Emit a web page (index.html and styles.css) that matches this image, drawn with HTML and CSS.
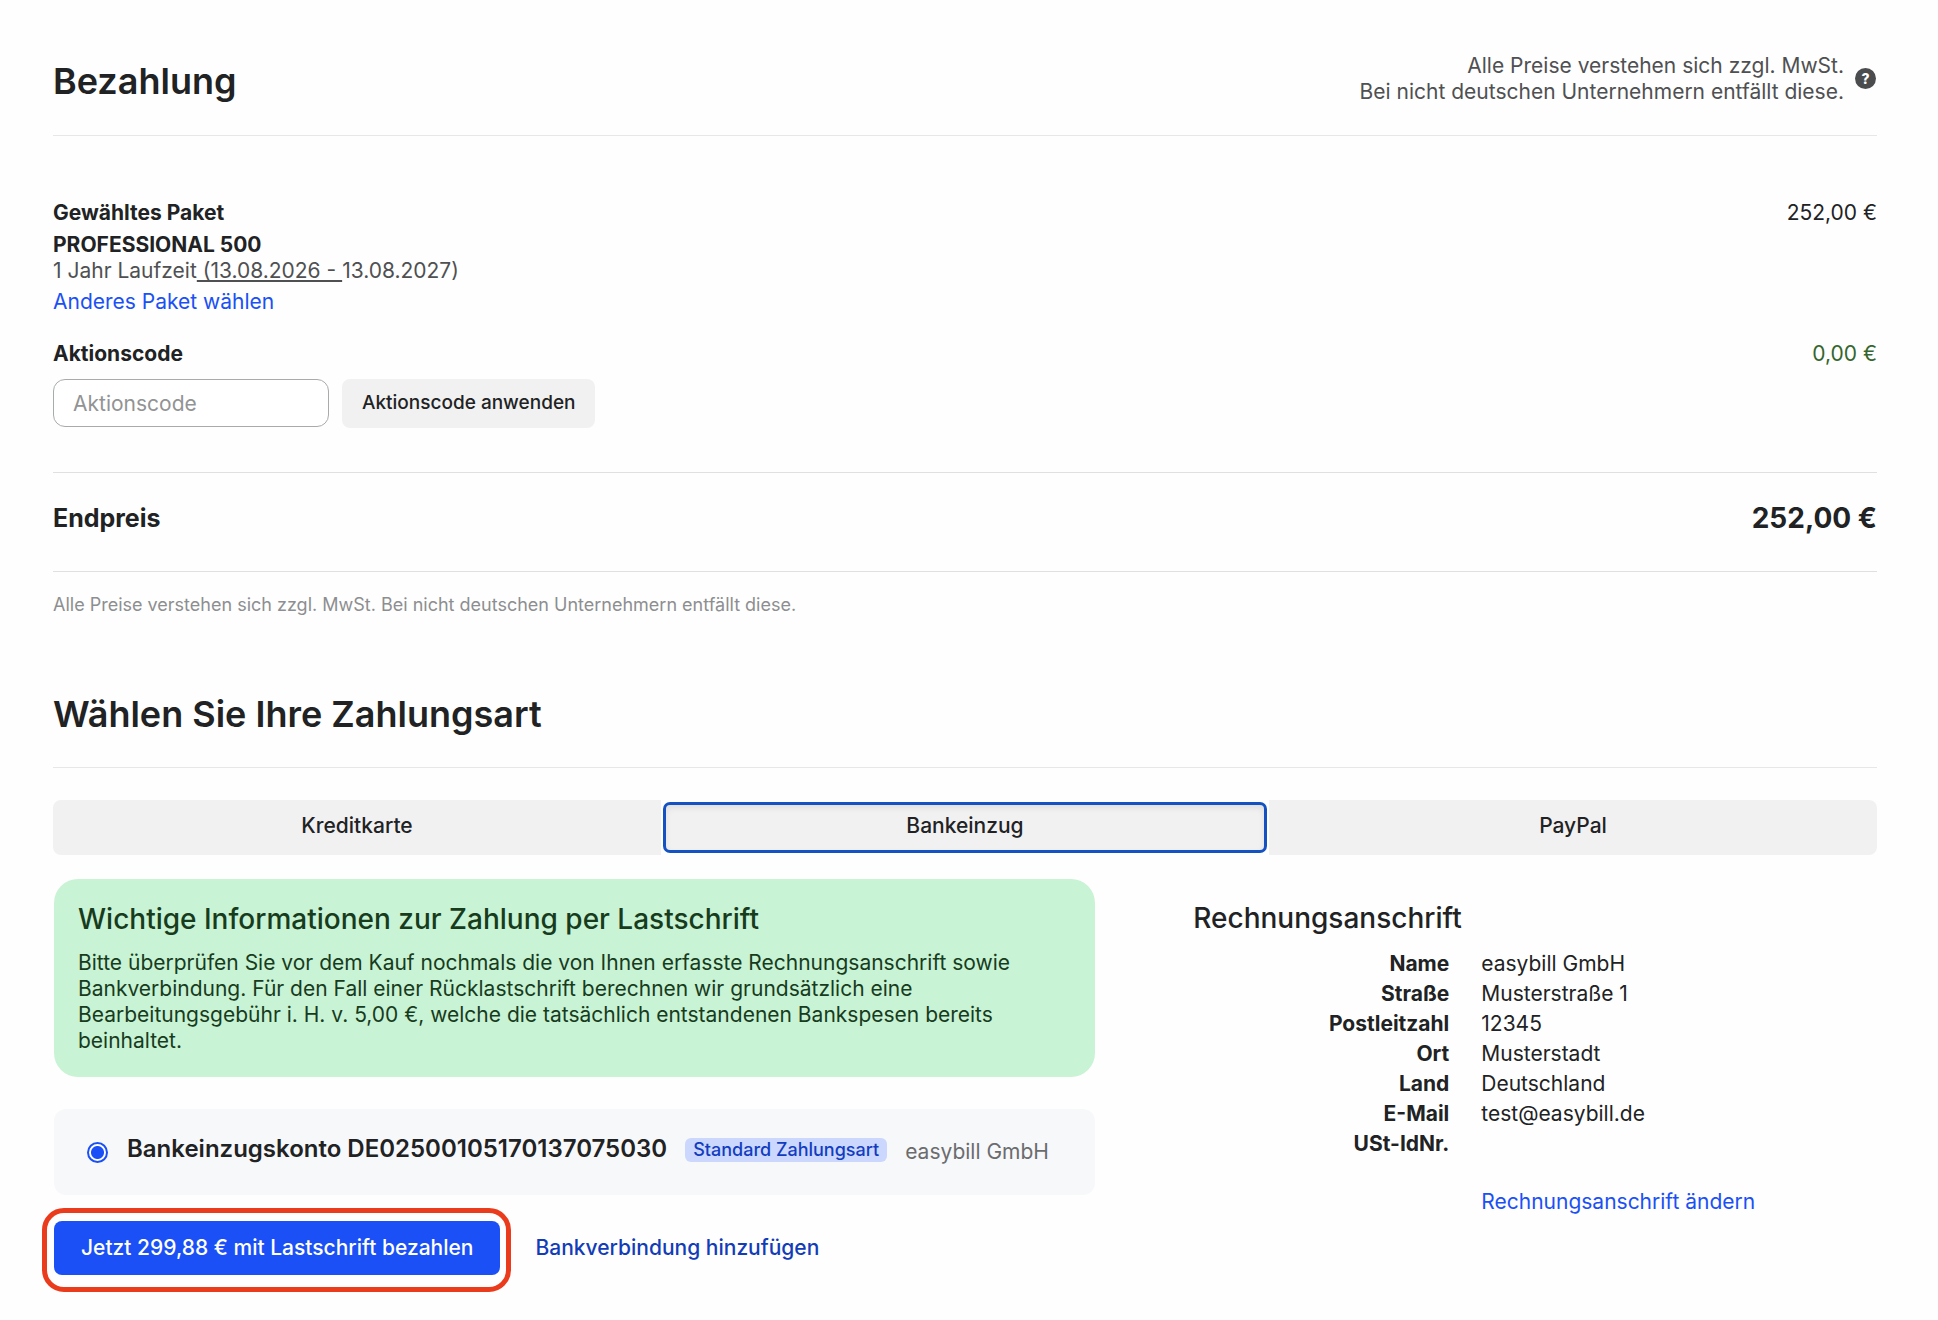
FILE: index.html
```html
<!DOCTYPE html>
<html lang="de">

<head>
    <meta charset="UTF-8">
    <meta name="viewport" content="width=device-width, initial-scale=1.0">
    <title>Bezahlung</title>
    <link rel="stylesheet" href="styles.css">
</head>

<body>
    <main class="container">
        <header class="page-header">
            <h1 class="title">Bezahlung</h1>
            <div class="vat">
                <p>Alle Preise verstehen sich zzgl. MwSt.<br>Bei nicht deutschen Unternehmern entfällt diese.</p>
                <button type="button" class="help" aria-label="Hilfe">?</button>
            </div>
        </header>

        <section class="order">
            <div class="row">
                <h2 class="label">Gewähltes Paket</h2>
                <span>252,00 €</span>
            </div>
            <div class="package">
                <strong>PROFESSIONAL 500</strong>
                <p class="runtime">1 Jahr Laufzeit<u> (13.08.2026 - </u>13.08.2027)</p>
            </div>
            <a href="#" class="link">Anderes Paket wählen</a>
            <div class="row code-row">
                <label class="label" for="code">Aktionscode</label>
                <span class="discount">0,00 €</span>
            </div>
            <form class="code-form">
                <input type="text" id="code" class="code-input" placeholder="Aktionscode">
                <button type="button" class="btn code-btn">Aktionscode anwenden</button>
            </form>
        </section>

        <section class="total">
            <h2 class="total-label">Endpreis</h2>
            <span class="total-price">252,00 €</span>
        </section>
        <p class="note">Alle Preise verstehen sich zzgl. MwSt. Bei nicht deutschen Unternehmern entfällt diese.</p>

        <h2 class="title payment-title">Wählen Sie Ihre Zahlungsart</h2>

        <div class="tabs">
            <button type="button" class="btn tab">Kreditkarte</button>
            <button type="button" class="btn tab active">Bankeinzug</button>
            <button type="button" class="btn tab">PayPal</button>
        </div>

        <div class="columns">
            <section class="payment">
                <div class="info">
                    <h3 class="subtitle">Wichtige Informationen zur Zahlung per Lastschrift</h3>
                    <p>Bitte überprüfen Sie vor dem Kauf nochmals die von Ihnen erfasste Rechnungsanschrift sowie Bankverbindung. Für den Fall einer Rücklastschrift berechnen wir grundsätzlich eine Bearbeitungsgebühr i. H. v. 5,00 €, welche die tatsächlich entstandenen Bankspesen bereits beinhaltet.</p>
                </div>
                <div class="account">
                    <input type="radio" id="account" name="account" class="radio" checked>
                    <label for="account" class="account-label">
                        <span class="iban">Bankeinzugskonto DE02500105170137075030</span>
                        <span class="badge">Standard Zahlungsart</span>
                        <span class="owner">easybill GmbH</span>
                    </label>
                </div>
                <div class="actions">
                    <div class="highlight">
                        <button type="button" class="btn pay-btn">Jetzt 299,88 € mit Lastschrift bezahlen</button>
                    </div>
                    <a href="#" class="add-link">Bankverbindung hinzufügen</a>
                </div>
            </section>

            <section class="billing">
                <h3 class="subtitle">Rechnungsanschrift</h3>
                <table class="address">
                    <tr><th scope="row">Name</th><td>easybill GmbH</td></tr>
                    <tr><th scope="row">Straße</th><td>Musterstraße 1</td></tr>
                    <tr><th scope="row">Postleitzahl</th><td>12345</td></tr>
                    <tr><th scope="row">Ort</th><td>Musterstadt</td></tr>
                    <tr><th scope="row">Land</th><td>Deutschland</td></tr>
                    <tr><th scope="row">E-Mail</th><td>test@easybill.de</td></tr>
                    <tr><th scope="row">USt-IdNr.</th><td></td></tr>
                </table>
                <a href="#" class="link address-link">Rechnungsanschrift ändern</a>
            </section>
        </div>
    </main>
</body>

</html>
```

FILE: styles.css
```css
* {
    margin: 0;
    padding: 0;
    box-sizing: border-box;
}

body {
    background-color: #fefefe;
    color: #212224;
    font-family: Inter, "Liberation Sans", sans-serif;
    font-size: 21px;
    line-height: 26px;
}

.container {
    padding: 52px 61px 28px 53px;
}

.page-header {
    display: flex;
    justify-content: space-between;
    border-bottom: 1px solid #e6e7e8;
    padding-bottom: 30px;
}

.title {
    font-size: 36px;
    font-weight: 600;
    line-height: 52px;
    padding-top: 3px;
}

.page-header .title {
    height: 52px;
}

.vat {
    display: flex;
    align-items: center;
    gap: 11px;
    padding-top: 1px;
    color: #4f5052;
    text-align: right;
}

.help {
    width: 21px;
    height: 21px;
    margin: 0 1px 2px 0;
    border: none;
    border-radius: 50%;
    background-color: #4b4c4e;
    color: #fff;
    font: 800 14px Inter, sans-serif;
    text-align: center;
}

.order {
    padding: 64px 0 44px;
    border-bottom: 1px solid #dfe0e2;
}

.row {
    display: flex;
    justify-content: space-between;
}

.label {
    font-size: 21px;
    font-weight: 700;
}

.package {
    padding: 6px 0 5px;
}

.package strong {
    display: block;
}

.runtime {
    color: #4f5052;
}

.link {
    color: #1a50f5;
    text-decoration: none;
}

.code-row {
    margin-top: 26px;
}

.discount {
    color: #34662d;
}

.code-form {
    display: flex;
    gap: 13px;
    margin-top: 12px;
}

.btn {
    border: none;
    background-color: #f1f1f1;
    color: #212224;
    font-family: inherit;
    font-size: 21px;
    font-weight: 500;
    line-height: 26px;
    cursor: pointer;
}

.code-input {
    width: 276px;
    height: 48px;
    padding: 0 19px;
    border: 1px solid #a9aaac;
    border-radius: 12px;
    background-color: #fff;
    font-family: inherit;
    font-size: 21px;
}

.code-input::placeholder {
    color: #929394;
}

.code-btn {
    height: 49px;
    padding: 0 20px 2px;
    border-radius: 8px;
    font-size: 19px;
}

.total {
    display: flex;
    justify-content: space-between;
    align-items: center;
    height: 99px;
    padding-bottom: 8px;
    border-bottom: 1px solid #dfe0e2;
}

.total-label {
    font-size: 25px;
    font-weight: 700;
}

.total-price {
    font-size: 28px;
    font-weight: 700;
}

.note {
    margin-top: 20px;
    color: #8d8e90;
    font-size: 18px;
}

.payment-title {
    margin-top: 70px;
    padding: 0 0 27px;
    border-bottom: 1px solid #e6e7e8;
}

.tabs {
    display: grid;
    grid-template-columns: repeat(3, 1fr);
    height: 55px;
    margin-top: 32px;
}

.tab {
    padding-bottom: 3px;
}

.tab:first-child {
    border-radius: 8px 0 0 8px;
}

.tab:last-child {
    border-radius: 0 8px 8px 0;
}

.tab.active {
    margin: 2px;
    border: 3px solid #1552c1;
    border-radius: 7px;
    box-shadow: inset 0 3px 6px rgba(0, 0, 0, 0.08);
}

.columns {
    display: grid;
    grid-template-columns: 4fr 3fr;
    margin-top: 24px;
}

.payment {
    padding-left: 1px;
}

.info {
    padding: 24px 24px 23px;
    border-radius: 24px;
    background-color: #c9f3d5;
    color: #173c1d;
}

.subtitle {
    margin-bottom: 15px;
    font-size: 28px;
    font-weight: 500;
    line-height: 32px;
}

.account {
    display: flex;
    align-items: center;
    gap: 19px;
    height: 86px;
    margin-top: 32px;
    padding: 0 33px;
    border-radius: 12px;
    background-color: #f7f8fa;
}

/* ring with filled dot */
.radio {
    appearance: none;
    width: 21px;
    height: 21px;
    border: 2px solid #1a50f5;
    border-radius: 50%;
    background: radial-gradient(circle, #1a50f5 6px, #fff 7px);
}

.account-label {
    display: flex;
    align-items: center;
    gap: 18px;
}

.iban {
    padding-bottom: 6px;
    font-size: 24px;
    font-weight: 600;
}

.badge {
    margin-bottom: 4px;
    padding: 0 8px;
    border-radius: 6px;
    background-color: #cbd7fd;
    color: #123cc0;
    font-size: 18px;
    font-weight: 500;
    line-height: 24px;
}

.owner {
    color: #6b6c6e;
}

.actions {
    display: flex;
    align-items: center;
    gap: 24px;
    margin: 13px 0 0 -12px;
}

/* red frame round the pay button */
.highlight {
    padding: 8px 6px 12px 7px;
    border: 5px solid #ea3c1c;
    border-radius: 22px;
}

.pay-btn {
    height: 54px;
    padding: 0 27px;
    border-radius: 8px;
    background-color: #1a50f5;
    color: #fff;
    font-weight: 500;
}

.add-link {
    margin-bottom: 4px;
    color: #123cb8;
    font-weight: 500;
    text-decoration: none;
}

.billing {
    display: flex;
    flex-direction: column;
    padding: 23px 0 0 98px;
}

.address {
    width: 100%;
    border-collapse: collapse;
    table-layout: fixed;
    margin-bottom: 30px;
}

.address tr {
    height: 30px;
}

.address th {
    width: 256px;
    text-align: right;
}

.address td {
    padding-left: 32px;
}

.address-link {
    margin-left: 288px;
}
```
